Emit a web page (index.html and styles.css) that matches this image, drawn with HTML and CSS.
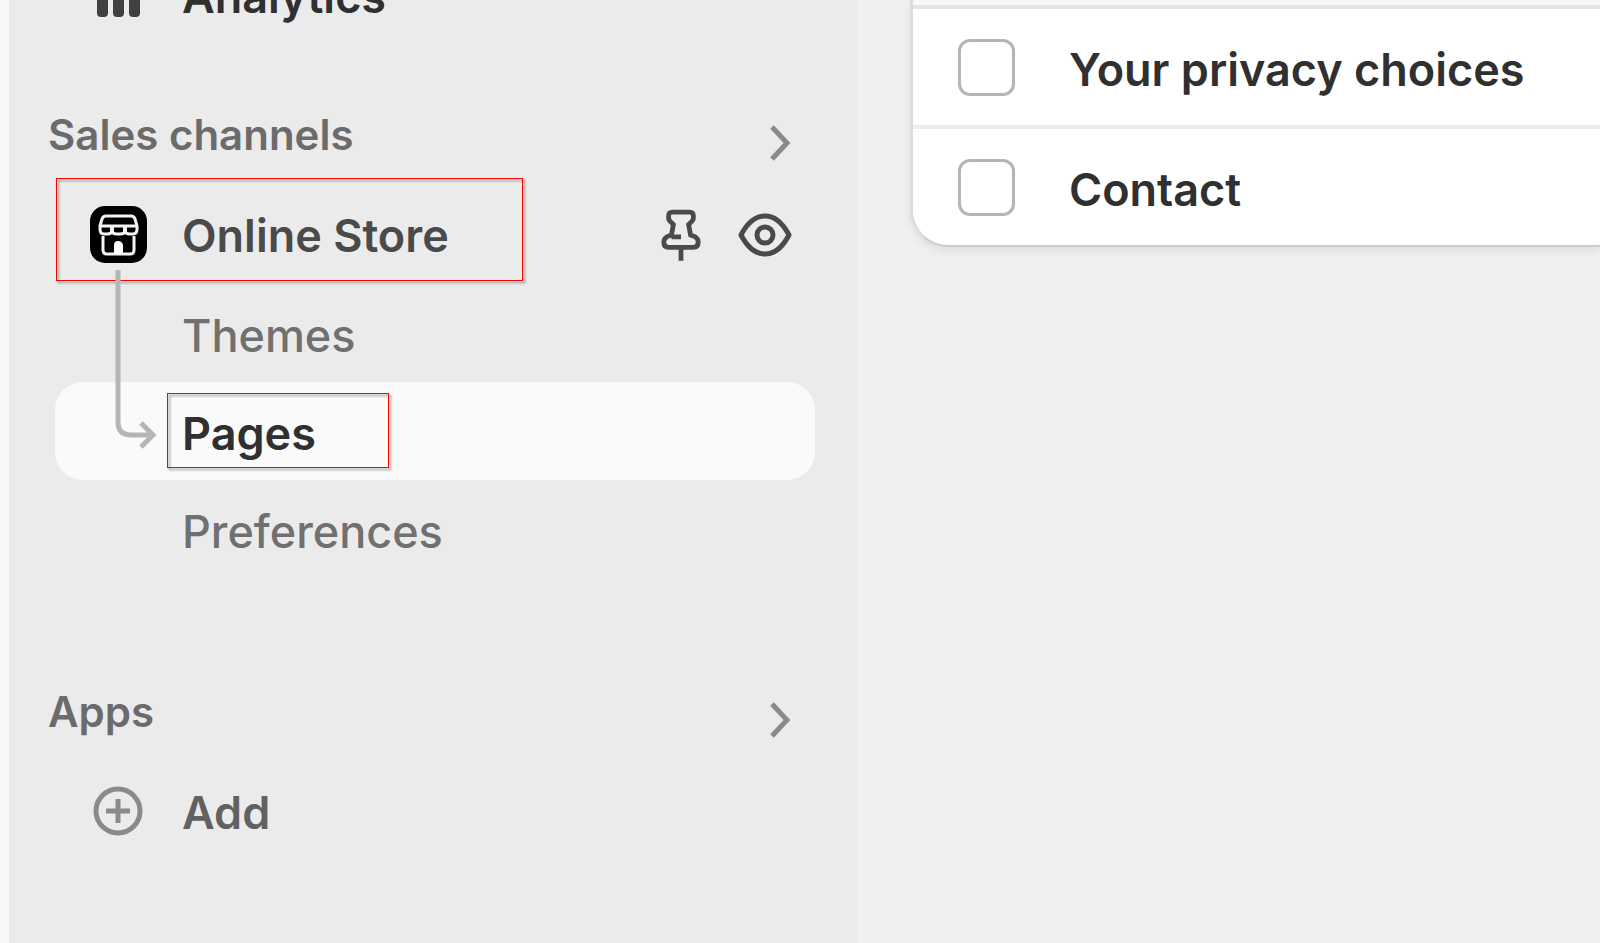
FILE: index.html
```
<!DOCTYPE html>
<html lang="en">
<head>
    <meta charset="UTF-8">
    <meta name="viewport" content="width=device-width, initial-scale=1.0">
    <title>Pages - Online Store</title>
    <link rel="stylesheet" href="styles.css">
</head>
<body>

    <div class="app">
        <nav class="sidebar">
            <ul class="nav-list nav-main">
                <li class="nav-item">
                    <a href="#" class="nav-link analytics">
                        <svg class="icon" viewBox="0 0 58 58" aria-hidden="true">
                            <g fill="#404040">
                                <rect x="8" y="24" width="11" height="26" rx="4"/>
                                <rect x="24" y="8" width="11" height="42" rx="4"/>
                                <rect x="40" y="16" width="11" height="34" rx="4"/>
                            </g>
                        </svg>
                        Analytics
                    </a>
                </li>
            </ul>

            <div class="section-header">
                <h2>Sales channels</h2>
                <button type="button" class="chevron" aria-label="Show sales channels">
                    <svg width="24" height="40" viewBox="0 0 24 40"><path d="M3 4l15 16L3 36" fill="none" stroke="#8a8a8a" stroke-width="5"/></svg>
                </button>
            </div>
            <ul class="nav-list channels">
                <li class="nav-item">
                    <a href="#" class="nav-link">
                        <svg class="icon" viewBox="0 0 58 58" aria-hidden="true">
                            <rect x="1" y="0" width="57" height="57" rx="15" fill="#000"/>
                            <g fill="none" stroke="#f4f4f4" stroke-width="3">
                                <path d="M17 10h25q3 0 4 3l2 7v3q0 5-4 5h-3q-5 0-5-4 0 4-5 4h-3q-5 0-5-4 0 4-5 4h-3q-4 0-4-5v-3l2-7q1-3 4-3z"/>
                                <path d="M11 20h37M14 30v14q0 4 4 4h23q4 0 4-4V30"/>
                                <path d="M23 20v6M36 20v6" stroke-width="4"/>
                            </g>
                            <path d="M25 48v-9q0-4 4-4t5 4v9z" fill="#fff"/>
                        </svg>
                        Online Store
                    </a>
                    <div class="actions">
                        <button type="button" aria-label="Pin">
                            <svg width="40" height="54" viewBox="0 0 42 56">
                                <path d="M12 4h18q4 0 4 4v2q0 3-3 5l-2 2 2 11 5 2q3 2 3 5v1q0 5-5 5H8q-5 0-5-5v-1q0-3 3-5l5-2 2-11-2-2q-3-2-3-5V8q0-4 4-4zM11 30h10M21 41v14" fill="none" stroke="#4a4a4a" stroke-width="5"/>
                            </svg>
                        </button>
                        <button type="button" aria-label="View your online store">
                            <svg width="56" height="48" viewBox="0 0 56 48">
                                <path d="M4 24Q14 5 28 5t24 19Q42 43 28 43T4 24z" fill="none" stroke="#4a4a4a" stroke-width="5" stroke-linejoin="round"/>
                                <circle cx="28" cy="24" r="8" fill="none" stroke="#4a4a4a" stroke-width="5"/>
                            </svg>
                        </button>
                    </div>
                    <span class="highlight highlight-store"></span>
                </li>
                <li class="nav-item"><a href="#" class="nav-link sub">Themes</a></li>
                <li class="nav-item">
                    <a href="#" class="nav-link sub active" aria-current="page">Pages</a>
                    <svg class="branch" width="46" height="184" viewBox="0 0 46 184" aria-hidden="true">
                        <path d="M5 0v152q0 13 13 13h21M28 153l12 12-12 12" fill="none" stroke="#b5b5b5" stroke-width="5"/>
                    </svg>
                    <span class="highlight highlight-pages"></span>
                </li>
                <li class="nav-item"><a href="#" class="nav-link sub">Preferences</a></li>
            </ul>

            <div class="section-header">
                <h2>Apps</h2>
                <button type="button" class="chevron" aria-label="Show apps">
                    <svg width="24" height="40" viewBox="0 0 24 40"><path d="M3 4l15 16L3 36" fill="none" stroke="#8a8a8a" stroke-width="5"/></svg>
                </button>
            </div>
            <ul class="nav-list">
                <li class="nav-item">
                    <a href="#" class="nav-link add">
                        <svg class="icon" viewBox="0 0 58 58" aria-hidden="true">
                            <circle cx="29" cy="28" r="22" fill="none" stroke="#8a8a8a" stroke-width="5"/>
                            <path d="M29 16v24M17 28h24" fill="none" stroke="#8a8a8a" stroke-width="5"/>
                        </svg>
                        Add
                    </a>
                </li>
            </ul>
        </nav>

        <main class="content">
            <div class="card">
                <table class="pages-table">
                    <tbody>
                        <tr>
                            <td class="check"><input type="checkbox" id="page-privacy"></td>
                            <td><label for="page-privacy">Your privacy choices</label></td>
                        </tr>
                        <tr>
                            <td class="check"><input type="checkbox" id="page-contact"></td>
                            <td><label for="page-contact">Contact</label></td>
                        </tr>
                    </tbody>
                </table>
            </div>
        </main>
    </div>

</body>
</html>
```
FILE: styles.css
```
* {
    box-sizing: border-box;
}

body {
    margin: 0;
    font-family: Inter, "Liberation Sans", sans-serif;
    font-size: 45px;
    color: #303030;
    background-color: #f0f0f0;
}

.app {
    display: flex;
    height: 100vh;
    overflow: hidden;
}

.sidebar {
    flex: 0 0 857px;
    padding: 0 42px 0 46px;
    background-color: #ebebeb;
    border-left: 9px solid #f7f7f7;
}

.nav-list {
    list-style: none;
    margin: 0;
    padding: 0;
}

/* list is scrolled part of the way up */
.nav-main {
    margin-top: -53px;
    margin-bottom: 65px;
}

.channels {
    margin-bottom: 109px;
}

.section-header {
    display: flex;
    justify-content: space-between;
    height: 66px;
    margin: 0 22px 10px -7px;
}

.section-header h2 {
    margin: 0;
    font-size: 42px;
    line-height: 50px;
    font-weight: 600;
    color: #6b6b6b;
}

button {
    display: flex;
    align-items: center;
    padding: 0;
    background: none;
    border: none;
    cursor: pointer;
}

.nav-item {
    position: relative;
    display: flex;
    align-items: center;
}

.nav-link {
    flex: 1;
    display: flex;
    align-items: center;
    gap: 35px;
    height: 98px;
    padding-left: 34px;
    border-radius: 28px;
    font-weight: 600;
    color: #4a4a4a;
    text-decoration: none;
}

.nav-link.analytics {
    color: #303030;
}

.nav-link.sub {
    padding-top: 4px;
    padding-left: 127px;
    font-weight: 500;
    color: #707070;
}

.nav-link.active {
    background-color: #fafafa;
    font-weight: 600;
    color: #303030;
}

.nav-link.add {
    color: #616161;
}

.icon {
    flex: none;
    width: 58px;
    height: 58px;
}

.actions {
    display: flex;
    align-items: center;
    gap: 36px;
    margin-right: 22px;
}

.branch {
    position: absolute;
    left: 58px;
    bottom: 26px;
}

/* red frames over the menu */
.highlight {
    position: absolute;
    border: 1px solid #ff0000;
    filter: drop-shadow(2px 2px 1px rgba(0, 0, 0, 0.5));
    pointer-events: none;
}

.highlight-store {
    left: 1px;
    top: -8px;
    width: 467px;
    height: 103px;
}

.highlight-pages {
    left: 112px;
    top: 11px;
    width: 222px;
    height: 75px;
}

.content {
    flex: 1;
    min-width: 0;
    padding-left: 53px;
}

.card {
    padding-top: 5px;
    background-color: #f7f7f7;
    border-left: 3px solid #dcdcdc;
    border-bottom: 2px solid #cccccc;
    border-bottom-left-radius: 38px;
    box-shadow: 0 4px 10px rgba(0, 0, 0, 0.08);
    overflow: hidden;
}

.pages-table {
    width: 100%;
    border-collapse: separate;
    border-spacing: 0;
    background-color: #ffffff;
}

.pages-table td {
    height: 120px;
    padding: 4px 0 0;
    border-top: 4px solid #ededed;
    font-weight: 600;
    vertical-align: middle;
}

.pages-table tr:first-child td {
    border-top-color: #e4e4e4;
}

.pages-table .check {
    width: 156px;
    padding-top: 0;
    padding-left: 45px;
}

.pages-table input {
    appearance: none;
    display: block;
    width: 57px;
    height: 57px;
    margin: 0;
    border: 3px solid #b5b5b5;
    border-radius: 12px;
    background-color: #ffffff;
}
```
